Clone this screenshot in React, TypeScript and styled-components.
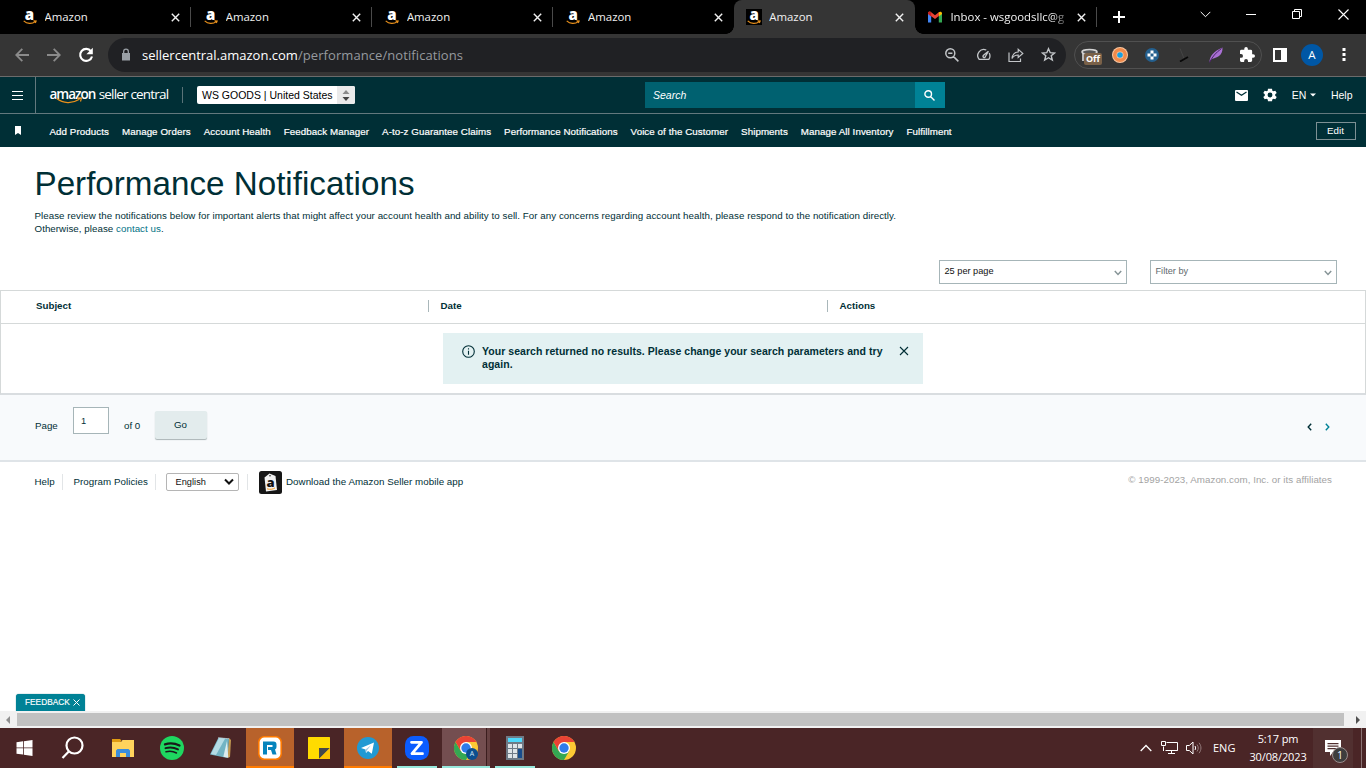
import React from "react";
import styled, { createGlobalStyle, css } from "styled-components";

const sans = '"Liberation Sans", Arial, sans-serif';
const ui = '"Open Sans", "Noto Sans", sans-serif';

const Global = createGlobalStyle`
  * { box-sizing: border-box; }
  html, body { margin: 0; padding: 0; overflow: hidden; background: #fff; }
  button { font: inherit; padding: 0; margin: 0; border: 0; background: none; color: inherit; }
  svg { display: block; flex: none; }
`;

const Screen = styled.div`
  width: 1366px;
  height: 768px;
  display: flex;
  flex-direction: column;
  overflow: hidden;
  font-family: ${sans};
  font-size: 9.75px;
  color: #002f36;
  background: #fff;
`;

/* ---------- browser tabs ---------- */
const TabStrip = styled.div`
  height: 34px;
  flex: none;
  display: flex;
  background: #000;
  padding-left: 9.5px;
  font-family: ${ui};
  font-size: 11.4px;
  color: #f1f1f1;
`;
const Tab = styled.div<{ $active?: boolean; $before?: boolean }>`
  position: relative;
  width: 181.2px;
  flex: none;
  display: flex;
  align-items: center;
  padding: 0 11px 0 12px;
  ${(p) =>
    p.$active
      ? css`
          background: #353535;
          border-radius: 8px 8px 0 0;
        `
      : css`
          &::after {
            content: "";
            position: absolute;
            right: 0;
            top: 7px;
            width: 1px;
            height: 20px;
            background: ${p.$before ? "transparent" : "#4a4a4a"};
          }
        `}
`;
const TabFoot = styled.span<{ $right?: boolean }>`
  position: absolute;
  bottom: 0;
  ${(p) => (p.$right ? "right: -8px;" : "left: -8px;")}
  width: 8px;
  height: 8px;
  background: radial-gradient(circle at ${(p) => (p.$right ? "100% 0" : "0 0")}, transparent 7.5px, #353535 8px);
`;
const TabTitle = styled.span<{ $fade?: boolean }>`
  flex: 1;
  min-width: 0;
  margin-left: 7px;
  line-height: 16px;
  white-space: nowrap;
  overflow: hidden;
  ${(p) =>
    p.$fade &&
    css`
      margin-right: 9px;
      mask-image: linear-gradient(90deg, #000 86%, transparent 103%);
    `}
`;
const Favicon = styled.span<{ $boxed?: boolean }>`
  width: 16px;
  height: 16px;
  display: flex;
  flex-direction: column;
  align-items: center;
  justify-content: flex-end;
  background: ${(p) => (p.$boxed ? "#000" : "transparent")};
`;
const FaviconLetter = styled.b`
  font: 800 15px/20px ${ui};
  height: 20px;
  margin: -9px 0 -4px;
  color: #fff;
`;
const WindowButtons = styled.div`
  margin-left: auto;
  display: flex;
  height: 28px;
`;
const WindowButton = styled.button`
  width: 46px;
  display: flex;
  align-items: center;
  justify-content: center;
`;
const NewTab = styled.button`
  width: 44px;
  display: flex;
  align-items: center;
  justify-content: center;
`;

/* ---------- browser toolbar ---------- */
const Toolbar = styled.div`
  height: 43px;
  flex: none;
  display: flex;
  align-items: center;
  padding: 0 6px 1px;
  background: #353535;
  border-bottom: 1px solid #6b6b6b;
`;
const Cell = styled.span<{ $w?: number }>`
  width: ${(p) => p.$w ?? 32}px;
  flex: none;
  display: flex;
  align-items: center;
  justify-content: center;
  position: relative;
`;
const Omnibox = styled.div`
  width: 958px;
  height: 34px;
  margin-left: 6px;
  padding: 0 2px 0 12px;
  display: flex;
  align-items: center;
  border-radius: 17px;
  background: #202124;
`;
const Url = styled.span`
  flex: 1;
  margin-left: 10px;
  font: 13px/20px ${ui};
  color: #fff;
  span { color: #969a9f; letter-spacing: 0.08px; }
`;
const Extensions = styled.div`
  display: flex;
  align-items: center;
  width: 188px;
  height: 28px;
  margin-left: 8px;
  margin-right: 2px;
  border: 1px solid #505050;
  border-radius: 14px;
`;
const OffBadge = styled.span`
  position: absolute;
  left: 9px;
  top: 5px;
  width: 18px;
  height: 12px;
  border-radius: 2px;
  background: #7a6148;
  color: #fff;
  font: 700 9px/12px ${ui};
  text-align: center;
`;
const Avatar = styled.span`
  width: 22px;
  height: 22px;
  border-radius: 50%;
  background: #0057a5;
  color: #fff;
  font: 11.5px/22px ${ui};
  text-align: center;
`;

/* ---------- seller central header ---------- */
const Header = styled.header`
  height: 37px;
  flex: none;
  display: flex;
  align-items: center;
  background: #002f36;
  border-bottom: 1px solid #63797e;
  color: #fff;
  font-size: 10.5px;
`;
const MenuButton = styled.button`
  width: 36px;
  height: 36px;
  display: flex;
  align-items: center;
  justify-content: center;
  border-right: 1px solid #63797e;
`;
const Brand = styled.div`
  position: relative;
  width: 133px;
  height: 16px;
  margin-left: 13.5px;
  border-right: 1px solid #5a7378;
  font: 13.5px/14px ${ui};
  white-space: nowrap;
  letter-spacing: -0.82px;
  b { font-weight: 600; letter-spacing: -1.02px; margin-right: 3.5px; }
  svg { position: absolute; left: 6px; top: 10px; }
`;
const AccountPicker = styled.div`
  width: 158px;
  height: 18px;
  margin-left: 14.5px;
  display: flex;
  justify-content: space-between;
  border-radius: 2px;
  overflow: hidden;
  background: #fff;
  color: #000;
  line-height: 18px;
  padding-left: 5px;
`;
const Spinner = styled.span`
  width: 18px;
  background: #eaeaea;
  display: flex;
  align-items: center;
  justify-content: center;
`;
const SearchBar = styled.div`
  width: 300px;
  height: 26px;
  margin-left: 290px;
  display: flex;
  background: #006170;
  font-style: italic;
  line-height: 26px;
  padding-left: 8px;
  justify-content: space-between;
`;
const SearchButton = styled.button`
  width: 30px;
  background: #008296;
  display: flex;
  align-items: center;
  justify-content: center;
  padding-right: 2px;
`;
const HeaderTools = styled.div`
  margin-left: auto;
  padding-right: 13.5px;
  display: flex;
  align-items: center;
`;
const Favorites = styled.nav`
  height: 33px;
  flex: none;
  display: flex;
  align-items: center;
  padding: 0 10px 0 15px;
  background: #002f36;
  color: #fff;
`;
const FavoriteList = styled.div`
  flex: 1;
  display: flex;
  gap: 13px;
  margin-left: 28.5px;
  padding-top: 2px;
  letter-spacing: 0.075px;
  white-space: nowrap;
  -webkit-text-stroke: 0.2px #fff;
`;
const EditButton = styled.button`
  width: 40px;
  height: 18px;
  padding-right: 1px;
  border: 1px solid #7d9094;
  font-size: 9.75px;
  line-height: 16px;
`;

/* ---------- page ---------- */
const Page = styled.main`
  flex: 1;
  min-height: 0;
  display: flex;
  flex-direction: column;
`;
const Intro = styled.section`
  height: 113px;
  flex: none;
  padding: 16px 0 0 34.5px;
`;
const Title = styled.h1`
  margin: 0;
  font-size: 33.2px;
  font-weight: 400;
  line-height: 41px;
`;
const Lead = styled.p`
  margin: 5px 0 0;
  width: 880px;
  line-height: 13px;
  letter-spacing: 0.043px;
  a { color: #007185; }
`;
const Filters = styled.div`
  height: 30px;
  flex: none;
  display: flex;
  justify-content: flex-end;
  gap: 23px;
  padding-right: 29px;
`;
const Dropdown = styled.div<{ $w: number; $muted?: boolean }>`
  width: ${(p) => p.$w}px;
  height: 24px;
  display: flex;
  align-items: center;
  justify-content: space-between;
  padding: 0 4.5px 0 4.5px;
  border: 1px solid #a6b5b8;
  font-size: 9.2px;
  line-height: 20px;
  color: ${(p) => (p.$muted ? "#5f6b6e" : "#111")};
  span { height: 22px; }
  svg { margin-top: 2px; }
`;
const Table = styled.section`
  height: 105px;
  flex: none;
  border: 1px solid #d5d9d9;
  border-bottom: 2px solid #d9dde0;
`;
const TableHead = styled.div`
  height: 33px;
  display: grid;
  grid-template-columns: 427px 399px 1fr;
  align-items: center;
  border-bottom: 1px solid #d5d9d9;
  font-weight: 700;
`;
const HeadCell = styled.div<{ $first?: boolean }>`
  height: 12px;
  margin-top: -2px;
  line-height: 12px;
  padding-left: ${(p) => (p.$first ? 35 : 11.5)}px;
  border-left: ${(p) => (p.$first ? "0" : "1px solid #a9b7ba")};
`;
const Notice = styled.div`
  width: 480px;
  height: 51px;
  margin: 9px 0 0 442px;
  display: flex;
  padding: 12px 14.5px 0 19px;
  background: #e3f1f2;
  font-size: 10.5px;
  line-height: 13px;
  font-weight: 700;
  p { margin: 0 0 0 7px; width: 408px; letter-spacing: 0.043px; }
  svg:last-child { margin: 1px 0 0 auto; }
`;
const Pager = styled.section`
  height: 67px;
  flex: none;
  display: flex;
  align-items: flex-start;
  padding: 12px 36.5px 0 35px;
  background: #f8fafc;
  border-bottom: 2px solid #dfe4e8;
`;
const PagerText = styled.span<{ $w: number }>`
  width: ${(p) => p.$w}px;
  padding-top: 12px;
  line-height: 13px;
`;
const PageInput = styled.span`
  width: 36px;
  height: 27px;
  margin-right: 15px;
  padding-left: 7px;
  border: 1px solid #a6b5b8;
  background: #fff;
  font-size: 9.3px;
  line-height: 26px;
`;
const GoButton = styled.button`
  width: 52px;
  height: 28px;
  margin-top: 4px;
  padding-bottom: 2px;
  border-radius: 2px;
  background: #e3eced;
  box-shadow: 0 1px 1px #a9b3b5;
  line-height: 25px;
`;
const Arrows = styled.div`
  margin: 16px 0 0 auto;
  display: flex;
  gap: 13px;
`;
const Footer = styled.footer`
  height: 44px;
  flex: none;
  display: flex;
  align-items: flex-start;
  padding: 9px 34px 0 34.5px;
  letter-spacing: 0.045px;
`;
const FootItem = styled.span<{ $w: number; $pad?: number }>`
  width: ${(p) => p.$w}px;
  height: 16px;
  margin-top: 3px;
  padding-left: ${(p) => p.$pad ?? 0}px;
  line-height: 16px;
  white-space: nowrap;
  border-right: 1px solid #e2e5e7;
`;
const Language = styled.span`
  width: 73px;
  height: 18px;
  margin: 2px 8px 0 10px;
  padding: 0 3px 0 8.5px;
  display: flex;
  align-items: center;
  justify-content: space-between;
  border: 1px solid #b5b5b5;
  border-radius: 2px;
  line-height: 16px;
  font-size: 9.2px;
  color: #111;
`;
const AppBadge = styled.span`
  width: 23px;
  height: 23px;
  margin: 0 4.5px 0 10.5px;
`;
const FootText = styled.span`
  padding-top: 3px;
  line-height: 16px;
`;
const Copyright = styled.span`
  margin-left: auto;
  padding-top: 1px;
  line-height: 16px;
  color: #a3a3a3;
`;
const Feedback = styled.div`
  width: 69px;
  height: 17px;
  flex: none;
  margin: auto 0 0 16px;
  display: flex;
  align-items: center;
  justify-content: space-between;
  padding: 0 5px 0 9px;
  border-radius: 3px 3px 0 0;
  background: #008296;
  box-shadow: 0 0 1px #006b7a;
  color: #fff;
  font-size: 8.3px;
  line-height: 17px;
  -webkit-text-stroke: 0.15px #fff;
`;
const ScrollTrack = styled.div`
  height: 17px;
  flex: none;
  display: flex;
  align-items: center;
  background: #f1f1f1;
  padding: 0 6px;
`;
const ScrollThumb = styled.span`
  width: 1327px;
  height: 13px;
  margin-left: 7px;
  margin-right: auto;
  background: #c1c1c1;
`;

/* ---------- taskbar ---------- */
const Taskbar = styled.div`
  height: 40px;
  flex: none;
  display: flex;
  gap: 1px;
  padding-left: 1px;
  background: #4a2526;
  color: #fff;
`;
const Task = styled.div<{ $bg?: string; $line?: string; $lineWidth?: number; $nudge?: number }>`
  position: relative;
  width: 48px;
  flex: none;
  display: flex;
  align-items: center;
  justify-content: center;
  padding-right: ${(p) => p.$nudge ?? 0}px;
  background: ${(p) => p.$bg ?? "transparent"};
  &::after {
    content: "";
    position: absolute;
    bottom: 0;
    left: 50%;
    transform: translateX(-50%);
    height: 2px;
    width: ${(p) => p.$lineWidth ?? 48}px;
    background: ${(p) => p.$line ?? "transparent"};
  }
`;
const ProfileDot = styled.span`
  position: absolute;
  left: 24px;
  top: 20px;
  width: 12px;
  height: 12px;
  border-radius: 50%;
  background: #0b4f8f;
  color: #cfe4f7;
  font: 7px/12px ${ui};
  text-align: center;
`;
const Tray = styled.div`
  margin-left: auto;
  display: flex;
  align-items: center;
  font-family: ${ui};
  font-size: 11px;
`;
const Lang = styled.span`
  width: 24px;
  margin: 0 12px 2px 10px;
`;
const Clock = styled.span`
  width: 58px;
  line-height: 18px;
  text-align: center;
  letter-spacing: -0.12px;
  white-space: nowrap;
`;
const ActionCenter = styled.span`
  position: relative;
  width: 40px;
  height: 40px;
  margin-left: 6px;
  display: flex;
  align-items: center;
  justify-content: center;
  background: #513030;
`;
const Count = styled.span`
  position: absolute;
  left: 19px;
  top: 19px;
  width: 16px;
  height: 16px;
  border: 1px solid #9a8d8d;
  border-radius: 50%;
  background: #3d3d3d;
  font: 10.5px/14px ${ui};
  text-align: center;
`;
const ShowDesktop = styled.span`
  width: 5px;
  height: 40px;
  margin-left: 8px;
  border-left: 1px solid #8a7273;
`;

type StrokeProps = { w: number; h?: number; d: string; c?: string; s?: number; vb?: string };
const Stroke = ({ w, h = w, d, c = "#fff", s = 1.5, vb }: StrokeProps) => (
  <svg width={w} height={h} viewBox={vb ?? `0 0 ${w} ${h}`} fill="none" stroke={c} strokeWidth={s}>
    <path d={d} />
  </svg>
);
const Solid = ({ w, h = w, d, c = "#fff", vb }: StrokeProps) => (
  <svg width={w} height={h} viewBox={vb ?? `0 0 ${w} ${h}`} fill={c}>
    <path d={d} fillRule="evenodd" />
  </svg>
);

const AmazonIcon = ({ boxed }: { boxed?: boolean }) => (
  <Favicon $boxed={boxed}>
    <FaviconLetter>a</FaviconLetter>
    <svg width="14" height="5" viewBox="0 0 14 5" fill="none" stroke="#e8901c" strokeWidth="1.2">
      <path d="M.7.9C4 4 9 4.2 12.300 1.600M10.500.9l2.600.1-.8 2" />
    </svg>
  </Favicon>
);

const ChromeLogo = () => (
  <svg width="24" height="24" viewBox="0 0 24 24">
    <circle cx="12" cy="12" r="12" fill="#fcc934" />
    <path d="M1.600 6A12 12 0 0 0 12 24l5.200-9L12 12 6.800 15z" fill="#34a853" />
    <path d="M1.600 6 6.800 15 12 12 12 6H22.400A12 12 0 0 0 1.600 6z" fill="#ea4335" />
    <circle cx="12" cy="12" r="6" fill="#fff" />
    <circle cx="12" cy="12" r="4.700" fill="#2f7bea" />
  </svg>
);

const tabs = [0, 1, 2, 3];
const favorites = [
  "Add Products",
  "Manage Orders",
  "Account Health",
  "Feedback Manager",
  "A-to-z Guarantee Claims",
  "Performance Notifications",
  "Voice of the Customer",
  "Shipments",
  "Manage All Inventory",
  "Fulfillment",
];

const closeGlyph = <Stroke w={9} d="M.8.8l7.4 7.4M8.2.8.8 8.2" c="#f1f1f1" s={1.4} />;

const BrowserTabs = () => (
  <TabStrip>
    {tabs.map((i) => (
      <Tab key={i} $before={i === 3}>
        <AmazonIcon />
        <TabTitle>Amazon</TabTitle>
        {closeGlyph}
      </Tab>
    ))}
    <Tab $active>
      <TabFoot />
      <AmazonIcon boxed />
      <TabTitle>Amazon</TabTitle>
      {closeGlyph}
      <TabFoot $right />
    </Tab>
    <Tab>
      <svg width="16" height="16" viewBox="0 0 16 16">
        <path d="M1 4v9.500h3.200V7L1 4z" fill="#4285f4" />
        <path d="M11.800 7v6.500H15V4l-3.200 3z" fill="#34a853" />
        <path d="M1 4.200C1 2.600 2.700 2 3.900 2.900L8 6.200l4.100-3.300L11.800 7 8 10 4.200 7.200 1 4.800z" fill="#ea4335" />
        <path d="M11.800 3.200c1.300-1.100 3.200-.5 3.200 1v.9L11.800 7.400z" fill="#fbbc04" />
        <path d="M4.200 3.200C2.900 2.100 1 2.700 1 4.200v.9l3.200 2.300z" fill="#c5221f" />
      </svg>
      <TabTitle $fade>Inbox - wsgoodsllc@g</TabTitle>
      {closeGlyph}
    </Tab>
    <NewTab>
      <Stroke w={12} d="M6 0v12M0 6h12" s={2} />
    </NewTab>
    <WindowButtons>
      <WindowButton><Stroke w={11} h={7} d="M.7.900l4.800 4.800L10.300.9" s={1} /></WindowButton>
      <WindowButton><Stroke w={10} h={2} d="M0 1.500h10" s={1} /></WindowButton>
      <WindowButton><Stroke w={10} d="M.5 2.500h7v7h-7zM2.500 2.500v-2h7v7h-2" s={1} /></WindowButton>
      <WindowButton><Stroke w={11} d="M.5.500l10 10M10.500.500l-10 10" s={1.1} /></WindowButton>
    </WindowButtons>
  </TabStrip>
);

const BrowserToolbar = () => (
  <Toolbar>
    <Cell><Stroke w={14} d="M14 7H1.500M7.300.8 1.200 7l6.100 6.200" c="#8b8b8b" s={1.8} /></Cell>
    <Cell><Stroke w={14} d="M0 7h12.500M6.700.8 12.800 7l-6.100 6.200" c="#8b8b8b" s={1.8} /></Cell>
    <Cell>
      <svg width="16" height="16" viewBox="0 0 16 16" fill="none" stroke="#fff" strokeWidth="2.1">
        <path d="M13 4.300A6 6 0 1 0 14 9.400" />
        <path d="M14.800.8v6.400H8.400z" fill="#fff" stroke="none" />
      </svg>
    </Cell>
    <Omnibox>
      <Cell $w={12}>
        <Solid w={10} h={13} c="#9aa0a6" d="M1 5h1V3.400a3 3 0 0 1 6 0V5h1v7.500H1zM3.300 5h3.400V3.400a1.700 1.700 0 0 0-3.400 0z" />
      </Cell>
      <Url>sellercentral.amazon.com<span>/performance/notifications</span></Url>
      <Cell><Stroke w={14} d="M9.800 5.300a4.500 4.500 0 1 1-9 0 4.500 4.500 0 0 1 9 0zM8.600 8.600l4.800 4.800M3.200 5.300h4.200" c="#c2c5c8" s={1.5} /></Cell>
      <Cell><Stroke w={14} h={13} d="M9.300 2A6 6 0 0 0 2.200 11.300h9.600A6 6 0 0 0 12.200 5M6 8.200a1.200 1.200 0 0 0 2.300.6L11.400 3.200 6.300 7.500z" c="#c2c5c8" s={1.3} /></Cell>
      <Cell><Stroke w={16} h={14} d="M1 4.500v9h11.500v-3M4 10.500C4.500 6.300 7 4.200 10.200 4V1.300L14.800 5.400l-4.600 4.100V7C7.500 7 5.500 8 4 10.500z" c="#c2c5c8" s={1.2} /></Cell>
      <Cell><Stroke w={15} d="M7.500 1.700l1.700 4 4.300.3-3.300 2.800 1.100 4.200-3.800-2.300-3.800 2.300 1.100-4.200L1.500 6l4.300-.3z" c="#c2c5c8" s={1.4} /></Cell>
    </Omnibox>
    <Extensions>
      <Cell $w={28}>
        <svg width="17" height="14" viewBox="0 0 17 14" fill="none">
          <path d="M1 4v9h3V5" fill="#b9b9b9" />
          <ellipse cx="8.500" cy="4" rx="7.500" ry="2.500" fill="#555" stroke="#d5d5d5" strokeWidth="1.600" />
        </svg>
        <OffBadge>Off</OffBadge>
      </Cell>
      <Cell $w={33}>
        <svg width="16" height="16" viewBox="0 0 16 16">
          <circle cx="8" cy="8" r="8" fill="#fbc7a0" />
          <circle cx="8" cy="8" r="5" fill="none" stroke="#f08a4b" strokeWidth="4" />
          <circle cx="8" cy="8" r="3.500" fill="#fbc7a0" />
          <circle cx="8" cy="8" r="2.800" fill="#189fe0" />
        </svg>
      </Cell>
      <Cell>
        <svg width="14" height="14" viewBox="0 0 14 14">
          <circle cx="7" cy="7" r="7" fill="#24608f" />
          <path d="M5.500 2.500h3v3h3v3h-3v3h-3v-3h-3v-3h3z" fill="#fff" />
          <path d="M5.500 5.500h3v3h-3z" fill="#24608f" />
        </svg>
      </Cell>
      <Cell>
        <svg width="10" height="14" viewBox="0 0 10 14" fill="none">
          <path d="M1 .5l4 10" stroke="#454545" />
          <path d="M1 13.500l8-4.500" stroke="#080808" strokeWidth="1.800" />
        </svg>
      </Cell>
      <Cell>
        <svg width="14" height="16" viewBox="0 0 14 16">
          <path d="M.5 15C.8 9 4.500 4.500 13.500.5c.2 4-1 6.500-3.500 8.500-2 1.500-5 2.500-7 2.800z" fill="#a970d4" />
          <path d="M.5 15.500C3 10 7 5.500 12.500 1.500" stroke="#4b2468" fill="none" />
        </svg>
      </Cell>
      <Cell $w={31}>
        <Solid w={15} vb="2 1 21 21" d="M20.500 11H19V7a2 2 0 0 0-2-2h-4V3.500a2.500 2.500 0 0 0-5 0V5H4a2 2 0 0 0-2 2v3.800h1.500a2.700 2.700 0 0 1 0 5.400H2V20a2 2 0 0 0 2 2h3.800v-1.500a2.700 2.700 0 0 1 5.400 0V22H17a2 2 0 0 0 2-2v-4h1.500a2.500 2.500 0 0 0 0-5z" />
      </Cell>
    </Extensions>
    <Cell><Solid w={14} d="M0 0h14v14H0zM2 2v10h6V2z" /></Cell>
    <Cell><Avatar>A</Avatar></Cell>
    <Cell><Solid w={4} h={13} d="M.5 0h3v3h-3zM.5 5h3v3h-3zM.5 10h3v3h-3z" /></Cell>
  </Toolbar>
);

const SellerHeader = () => (
  <>
    <Header>
      <MenuButton><Stroke w={11} h={9} d="M0 .5h11M0 4.500h11M0 8.500h11" s={1.1} /></MenuButton>
      <Brand>
        <b>amazon</b>seller central
        <svg width="27" height="8" viewBox="0 0 27 8" fill="none" stroke="#e8901c" strokeWidth="1.200">
          <path d="M.7 1.500C7 6.500 16 7 23.500 2.300M21 1.300l4.500-.3-1 3.500" />
        </svg>
      </Brand>
      <AccountPicker>
        WS GOODS | United States
        <Spinner>
          <svg width="8" height="11" viewBox="0 0 8 11">
            <path d="M4 0l3.500 4h-7z" fill="#8a8a8a" />
            <path d="M4 11l3.500-4h-7z" fill="#444" />
          </svg>
        </Spinner>
      </AccountPicker>
      <SearchBar>
        Search
        <SearchButton><Stroke w={11} d="M7.500 4a3.300 3.300 0 1 1-6.600 0 3.300 3.300 0 0 1 6.600 0zM6.500 6.500l4 4" s={1.4} /></SearchButton>
      </SearchBar>
      <HeaderTools>
        <svg width="13" height="11" viewBox="0 0 13 11">
          <rect width="13" height="11" rx="1" fill="#fff" />
          <path d="M1.500 2l5 3.300 5-3.300" stroke="#002f36" fill="none" strokeWidth="1.200" />
        </svg>
        <Cell $w={44}>
          <Solid
            w={14}
            vb="2 2 20 20"
            d="M19.400 13a7.500 7.500 0 0 0 0-2l2.200-1.700-2-3.500-2.600 1a7.500 7.500 0 0 0-1.700-1L14.900 3H9.100l-.4 2.800a7.500 7.500 0 0 0-1.700 1l-2.600-1-2 3.500L4.600 11a7.500 7.500 0 0 0 0 2l-2.200 1.700 2 3.500 2.600-1a7.500 7.500 0 0 0 1.700 1l.4 2.800h5.800l.4-2.800a7.500 7.500 0 0 0 1.700-1l2.600 1 2-3.500zM12 15.500a3.500 3.500 0 1 1 0-7 3.500 3.500 0 0 1 0 7z"
          />
        </Cell>
        EN
        <Cell $w={14}><Solid w={6} h={4} d="M0 .5h6L3 3.500z" /></Cell>
        <Cell $w={10.5} />
        Help
      </HeaderTools>
    </Header>
    <Favorites>
      <Solid w={6} h={9} d="M0 0h6v9L3 7 0 9z" />
      <FavoriteList>{favorites.map((f) => <span key={f}>{f}</span>)}</FavoriteList>
      <EditButton>Edit</EditButton>
    </Favorites>
  </>
);

const Content = () => (
  <Page>
    <Intro>
      <Title>Performance Notifications</Title>
      <Lead>
        Please review the notifications below for important alerts that might affect your account health and ability to
        sell. For any concerns regarding account health, please respond to the notification directly.
        <br />
        Otherwise, please <a>contact us</a>.
      </Lead>
    </Intro>
    <Filters>
      <Dropdown $w={188}><span>25 per page</span><Stroke w={8} h={6} d="M.8 1l3.200 3.400L7.200 1" c="#869497" /></Dropdown>
      <Dropdown $w={187} $muted><span>Filter by</span><Stroke w={8} h={6} d="M.8 1l3.200 3.400L7.200 1" c="#869497" /></Dropdown>
    </Filters>
    <Table>
      <TableHead>
        <HeadCell $first>Subject</HeadCell>
        <HeadCell>Date</HeadCell>
        <HeadCell>Actions</HeadCell>
      </TableHead>
      <Notice>
        <svg width="13" height="13" viewBox="0 0 13 13" fill="none" stroke="#002f36" strokeWidth="1.100">
          <circle cx="6.500" cy="6.500" r="5.800" />
          <path d="M6.500 5.800v4M6.500 3.300v1.300" />
        </svg>
        <p>Your search returned no results. Please change your search parameters and try again.</p>
        <Stroke w={10} d="M1 1l8 8M9 1L1 9" c="#002f36" s={1.1} />
      </Notice>
    </Table>
    <Pager>
      <PagerText $w={38}>Page</PagerText>
      <PageInput>1</PageInput>
      <PagerText $w={30.5}>of 0</PagerText>
      <GoButton>Go</GoButton>
      <Arrows>
        <Stroke w={5} h={8} d="M4.200.8L1.200 4l3 3.200" c="#002f36" s={1.4} />
        <Stroke w={5} h={8} d="M.8.800l3 3.200-3 3.200" c="#008296" s={1.4} />
      </Arrows>
    </Pager>
    <Footer>
      <FootItem $w={28.5}>Help</FootItem>
      <FootItem $w={93} $pad={10.5}>Program Policies</FootItem>
      <Language>English<Stroke w={12} h={8} d="M2 1.500l4 4 4-4" c="#111" s={2} /></Language>
      <FootItem $w={1} />
      <AppBadge>
        <svg width="23" height="23" viewBox="0 0 23 23">
          <rect width="23" height="23" rx="2.500" fill="#161616" />
          <path d="M5.500 6.500L10.500 2.500l6 2.500L18 19 7 20.500z" fill="#f2f2f2" />
          <circle cx="11" cy="4.800" r=".8" fill="#222" />
          <text x="7.500" y="15.500" fontSize="13" fontWeight="800" fontFamily="Open Sans" fill="#111">a</text>
          <path d="M8 17.800c3 .9 6 .5 8-.9" stroke="#f79a1c" fill="none" />
        </svg>
      </AppBadge>
      <FootText>Download the Amazon Seller mobile app</FootText>
      <Copyright>© 1999-2023, Amazon.com, Inc. or its affiliates</Copyright>
    </Footer>
    <Feedback>FEEDBACK<Stroke w={7} d="M.5.500l6 6M6.500.500l-6 6" s={1} /></Feedback>
    <ScrollTrack>
      <Solid w={4} h={8} d="M4 0v8L0 4z" c="#8f8f8f" />
      <ScrollThumb />
      <Solid w={4} h={8} d="M0 0v8l4-4z" c="#505050" />
    </ScrollTrack>
  </Page>
);

const orange = "#b8622b";
const WindowsTaskbar = () => (
  <Taskbar>
    <Task $nudge={1}><Solid w={17} h={16} vb="0 0 16 16" d="M0 2.300l6.500-1v6.200H0zM7.300 1.200L16 0v7.500H7.300zM0 8.300h6.500v6.300L0 13.700zM7.300 8.300H16V16l-8.700-1.300z" /></Task>
    <Task $nudge={3}><Stroke w={24} d="M21.500 9.500a8 8 0 1 1-16 0 8 8 0 0 1 16 0zM7.800 15.500L1.500 22" s={2.2} /></Task>
    <Task>
      <svg width="22" height="18" viewBox="0 0 22 18">
        <path d="M0 3h9l1.500-2H22v17H0z" fill="#ffd35c" />
        <path d="M0 0h8l1.500 1.500L8.500 3H0z" fill="#e09c12" />
        <path d="M4 18v-6.500L5.500 10h11L18 11.500V18h-4v-4H8v4z" fill="#3a8ddb" />
      </svg>
    </Task>
    <Task>
      <svg width="24" height="24" viewBox="0 0 24 24" fill="none" stroke="#18191a" strokeLinecap="round">
        <circle cx="12" cy="12" r="12" fill="#1ed760" stroke="none" />
        <path d="M5 8.300c5-1.500 10-1 14.500 1.200" strokeWidth="2.300" />
        <path d="M5.500 12.200c4.500-1.300 8.500-.8 12.500 1.200" strokeWidth="1.900" />
        <path d="M6 15.800c4-1 7-.7 10.500 1.200" strokeWidth="1.500" />
      </svg>
    </Task>
    <Task>
      <svg width="24" height="24" viewBox="0 0 24 24">
        <path d="M20 2l2 2-1 17-3 1z" fill="#c39a52" />
        <path d="M9.500 1.500L20 2.500 18.500 22 1 18.500z" fill="#72b4c4" />
        <path d="M10 2l6 .7L7 19 2 18z" fill="#b5dce5" />
        <path d="M18 5l1.300 16.800-5-1z" fill="#dcecef" />
        <path d="M9.500 1.800L20 2.700" stroke="#e8e8e8" strokeDasharray="1 1" />
      </svg>
    </Task>
    <Task $bg={orange} $line="#ff7b00">
      <svg width="24" height="24" viewBox="0 0 24 24">
        <rect x=".8" y=".8" width="22.400" height="22.400" rx="5.500" fill="#fff" stroke="#ff7a00" strokeWidth="1.600" />
        <path d="M5 5.500h10.500q3 0 3 3V11q0 1.800-1.500 2.500l1.500 5h-4L13 14h-3v-3h4.500V9H9v9.500H5z" fill="#0684bd" />
      </svg>
    </Task>
    <Task>
      <svg width="22" height="22" viewBox="0 0 22 22">
        <rect width="22" height="22" rx=".5" fill="#ffdb00" />
        <path d="M11 22V11h11z" fill="#46484a" />
        <path d="M11 22h11V11z" fill="#ffc400" />
      </svg>
    </Task>
    <Task $bg={orange} $line="#ff7b00">
      <svg width="22" height="22" viewBox="0 0 22 22">
        <circle cx="11" cy="11" r="11" fill="#2199d3" />
        <path d="M4 11l13-5.500-2.200 11.200-3.800-2.800-2 2-.5-3.500z" fill="#fff" />
        <path d="M8.500 12.400L14 8.300l-4 5-1 2.600z" fill="#9cc8e5" />
      </svg>
    </Task>
    <Task $line="#97e8dc" $lineWidth={40}>
      <svg width="24" height="24" viewBox="0 0 24 24">
        <rect width="24" height="24" rx="8.500" fill="#0b5cff" />
        <path d="M6.500 6.300h10L7 17.700h10.500" stroke="#fff" strokeWidth="2.800" fill="none" strokeLinejoin="round" strokeLinecap="round" />
      </svg>
    </Task>
    <Task $bg="linear-gradient(90deg,#744e50 44px,#3b1d1e 44px 45px,#664142 45px)" $line="#97e8dc">
      <ChromeLogo />
      <ProfileDot>A</ProfileDot>
    </Task>
    <Task $line="#97e8dc" $lineWidth={40}>
      <svg width="18" height="24" viewBox="0 0 18 24">
        <rect width="18" height="24" fill="#6f7a86" />
        <rect x="2" y="2" width="14" height="4" fill="#4fd8fb" />
        <path d="M2 8h4v4H2zM7 8h4v4H7zM12 8h4v4h-4zM2 13h4v4H2zM7 13h4v4H7zM2 18h4v4H2zM7 18h4v4H7z" fill="#dfe4e8" />
        <path d="M12 13h4v9h-4z" fill="#174c8c" />
      </svg>
    </Task>
    <Task><ChromeLogo /></Task>
    <Tray>
      <Stroke w={12} h={8} d="M.7 7L6 1.500 11.300 7" s={1.3} />
      <Cell $w={34}>
        <Stroke w={17} h={14} d="M5.500 1.500h11v8h-11M2.500 5.500V10M.5.500h4v4h-4zM4.500 9.500h12M10.500 9.500v3M7 12.500h7" s={1} />
      </Cell>
      <svg width="17" height="14" viewBox="0 0 17 14" fill="none" stroke="#fff">
        <path d="M.5 4.500h2.800L7 1v12L3.300 9.500H.5z" />
        <path d="M9 5c.8 1.300.8 2.700 0 4" />
        <path d="M11 3.500c1.700 2.300 1.700 4.700 0 7M13 1.800c2.600 3.400 2.600 7 0 10.400" stroke="#957d7e" />
      </svg>
      <Lang>ENG</Lang>
      <Clock>5:17 pm<br />30/08/2023</Clock>
      <ActionCenter>
        <Solid w={16} h={16} d="M0 0h16v12H8l-3 4v-4H0zM2.500 3v1.200h11V3zM2.500 5.500v1.200h11V5.500zM2.500 8v1.200h11V8z" />
        <Count>1</Count>
      </ActionCenter>
      <ShowDesktop />
    </Tray>
  </Taskbar>
);

export default function App() {
  return (
    <Screen>
      <Global />
      <BrowserTabs />
      <BrowserToolbar />
      <SellerHeader />
      <Content />
      <WindowsTaskbar />
    </Screen>
  );
}
